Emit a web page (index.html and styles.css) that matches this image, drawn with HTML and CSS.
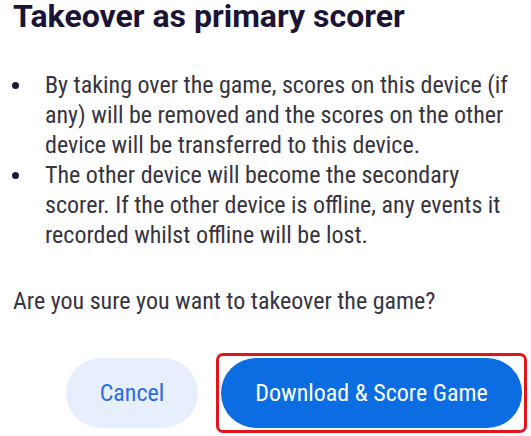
FILE: index.html
```
<!DOCTYPE html>
<html><head><meta charset="utf-8"><link rel="stylesheet" href="styles.css"></head>
<body>
<div class="dialog">
  <h1 class="title">Takeover as primary scorer</h1>
  <ul class="points">
    <li>By taking over the game, scores on this device (if any) will be removed and the scores on the other device will be transferred to this device.</li>
    <li>The other device will become the secondary scorer. If the other device is offline, any events it recorded whilst offline will be lost.</li>
  </ul>
  <p class="question">Are you sure you want to takeover the game?</p>
  <div class="actions">
    <button class="btn btn-cancel">Cancel</button>
    <div class="highlight"><button class="btn btn-primary">Download &amp; Score Game</button></div>
  </div>
</div>
</body></html>
```
FILE: styles.css
```
html,body{margin:0;padding:0;background:#fff}
.dialog{width:531px;height:436px;box-sizing:border-box;padding:0 4px 0 13px;font-family:Roboto,"Noto Sans",sans-serif;font-stretch:condensed;display:flex;flex-direction:column}
.title{margin:-3px 0 0;font-size:32px;line-height:38px;font-weight:700;font-stretch:normal;color:#1c1435;white-space:nowrap}
.points{margin:35px 0 0;padding:0 0 0 32px;list-style:none;color:#37343f;font-size:24px;line-height:30px}
.points li{position:relative}
.points li::before{content:"";position:absolute;left:-33px;top:12px;width:7px;height:7px;border-radius:50%;background:#1d1838}
.question{margin:36px 0 0;font-size:24px;line-height:30px;color:#37343f;white-space:nowrap}
.actions{margin-top:37px;display:flex;justify-content:flex-end;align-items:center;gap:18px}
.btn{border:0;height:70px;border-radius:35px;font-family:Roboto,sans-serif;font-stretch:condensed;font-size:24px;font-weight:400;padding:0;cursor:pointer}
.btn-cancel{width:132px;background:#e7effc;color:#2a6de0}
.highlight{border:3px solid #e0161e;border-radius:7px;padding:2px}
.btn-primary{display:block;width:301px;background:#0c6de2;color:#fff}
```
